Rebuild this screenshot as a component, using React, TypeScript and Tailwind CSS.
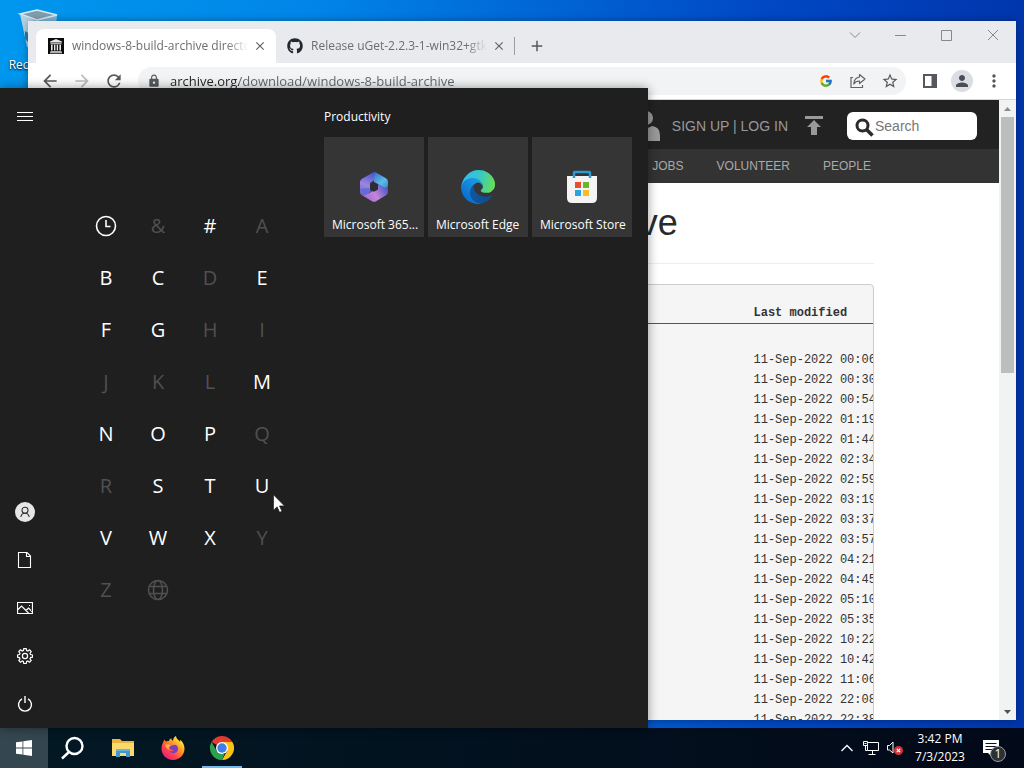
import type { ReactNode } from "react";
import { FaGithub } from "react-icons/fa";
import { FcGoogle } from "react-icons/fc";
import {
  MdAdd,
  MdArrowBack,
  MdArrowForward,
  MdClose,
  MdLock,
  MdMoreVert,
  MdPerson,
  MdRefresh,
  MdStarOutline,
} from "react-icons/md";

const modifiedDates = [
  "11-Sep-2022 00:06",
  "11-Sep-2022 00:30",
  "11-Sep-2022 00:54",
  "11-Sep-2022 01:19",
  "11-Sep-2022 01:44",
  "11-Sep-2022 02:34",
  "11-Sep-2022 02:59",
  "11-Sep-2022 03:19",
  "11-Sep-2022 03:37",
  "11-Sep-2022 03:57",
  "11-Sep-2022 04:21",
  "11-Sep-2022 04:45",
  "11-Sep-2022 05:10",
  "11-Sep-2022 05:35",
  "11-Sep-2022 10:22",
  "11-Sep-2022 10:42",
  "11-Sep-2022 11:06",
  "11-Sep-2022 22:08",
  "11-Sep-2022 22:38",
];

const letters = "&#ABCDEFGHIJKLMNOPQRSTUVWXYZ".split("");
const enabledLetters = "#BCEFGMNOPSTUVWX";

/* ---------- Icons ---------- */

function RecycleBinIcon() {
  return (
    <svg width="48" height="48" viewBox="0 0 48 48" aria-hidden="true">
      <path d="M4 6 21 2l20 5-3 36-24 3z" fill="#a9c6d6" opacity=".75" />
      <path d="M4 6 21 2l20 5-20 5z" fill="#7f9fb0" stroke="#dcebf2" strokeWidth="1.5" />
      <path d="M4 6l14 6 2 32-9-5z" fill="#c6dbe6" opacity=".8" />
      <path d="M9 23l5 3-2 8-3-3z" fill="#2b7fae" />
    </svg>
  );
}

function ArchiveFavicon() {
  return (
    <svg width="16" height="16" viewBox="0 0 16 16" aria-hidden="true">
      <path d="M0 0h16v16H0z" fill="#0a0a0a" />
      <path d="M8 1l6 2.4v1.2H2V3.4zM2.5 5.3h11v.9h-11zM3 6.8h1.6v5.7H3zM6 6.8h1.4v5.7H6zM8.7 6.8h1.4v5.7H8.7zM11.4 6.8H13v5.7h-1.6zM2.5 13h11v.8h-11zM2 14.2h12v1H2z" fill="#e8e8e8" />
    </svg>
  );
}

function ShareIcon() {
  return (
    <svg width="16" height="16" viewBox="0 0 16 16" fill="none" stroke="#5f6368" strokeWidth="1.2" aria-hidden="true">
      <path d="M3 4.5H1v10h11.5V12" />
      <path d="M9.5 1.5 15 6l-5.500 4.500V8C6.500 8 5 9 3.800 11c.2-4 2.200-6.500 5.700-7z" strokeLinejoin="round" />
    </svg>
  );
}

function Microsoft365Icon() {
  return (
    <svg width="30" height="32" viewBox="0 0 30 32" aria-hidden="true">
      <defs>
        <linearGradient id="m365-left" x1="12" y1="2" x2="4" y2="24" gradientUnits="userSpaceOnUse">
          <stop offset="0" stopColor="#4d58cf" />
          <stop offset=".55" stopColor="#9d86e0" />
          <stop offset="1" stopColor="#6e62cc" />
        </linearGradient>
        <linearGradient id="m365-right" x1="14" y1="3" x2="27" y2="18" gradientUnits="userSpaceOnUse">
          <stop offset="0" stopColor="#3f6fc8" />
          <stop offset=".6" stopColor="#58bde8" />
          <stop offset="1" stopColor="#3f8fd0" />
        </linearGradient>
        <linearGradient id="m365-bottom" x1="8" y1="28" x2="28" y2="16" gradientUnits="userSpaceOnUse">
          <stop offset="0" stopColor="#a86fd6" />
          <stop offset=".4" stopColor="#c585da" />
          <stop offset="1" stopColor="#4a56c4" />
        </linearGradient>
      </defs>
      <path d="M14 1.500 3 7.800Q1 9 1 11v10q0 2.200 2 3.300l3 1.500 5-5V12l9-6-3-4.500q-1.500-1-3 0z" fill="url(#m365-left)" />
      <path d="M17 1.500 27 7.300q2 1.200 2 3.700v9l-10-7-4-2V6q0-3 2-4.500z" fill="url(#m365-right)" />
      <path d="M29 14v7q0 2-2 3.200l-10 6q-2 1-4 0l-10-6q3 1 5-1l11-6V13l5 3q4 2 5-2z" fill="url(#m365-bottom)" />
      <path d="M1 18q1 5 6 5l6-3-3-3z" fill="#5a6cd8" opacity=".8" />
      <path d="M15 11.500 19 13.800v4.600L15 20.700l-4-2.300v-4.600z" fill="#2e2c34" />
    </svg>
  );
}

function EdgeIcon() {
  return (
    <svg width="34" height="34" viewBox="0 0 256 256" aria-hidden="true">
      <defs>
        <linearGradient id="edge-a" x1="63" y1="177" x2="241" y2="177" gradientUnits="userSpaceOnUse">
          <stop offset="0" stopColor="#0c59a4" />
          <stop offset="1" stopColor="#114a8b" />
        </linearGradient>
        <linearGradient id="edge-b" x1="157" y1="99" x2="46" y2="220" gradientUnits="userSpaceOnUse">
          <stop offset="0" stopColor="#1b9de2" />
          <stop offset=".6" stopColor="#1680d8" />
          <stop offset="1" stopColor="#0a6fd0" />
        </linearGradient>
        <linearGradient id="edge-c" x1="10" y1="60" x2="245" y2="120" gradientUnits="userSpaceOnUse">
          <stop offset="0" stopColor="#35b8f0" />
          <stop offset=".5" stopColor="#36c8c8" />
          <stop offset="1" stopColor="#66dd55" />
        </linearGradient>
      </defs>
      <path d="M231 190a94 94 0 0 1-11 5 102 102 0 0 1-36 6c-47 0-89-32-89-74 0-11 7-22 17-28-43 2-54 46-54 72 0 74 68 81 82 81 8 0 20-2 27-4h2a128 128 0 0 0 66-53 4 4 0 0 0-4-5z" fill="url(#edge-a)" />
      <path d="M106 241a79 79 0 0 1-23-21 81 81 0 0 1 29-121c3-1 8-4 16-4a33 33 0 0 1 26 13 33 33 0 0 1 6 19c0-1 25-80-80-80-44 0-80 42-80 79a130 130 0 0 0 12 56 128 128 0 0 0 157 66 76 76 0 0 1-63-7z" fill="url(#edge-b)" />
      <path d="M152 149c-1 1-3 3-3 6 0 3 2 6 5 8 14 10 42 9 42 9a60 60 0 0 0 31-9 62 62 0 0 0 30-53c0-22-8-37-11-43C226 26 182 0 134 0A128 128 0 0 0 6 126c1-36 37-66 80-66 4 0 24 0 42 10 16 8 24 19 30 28 6 11 7 24 7 29 0 6-2 14-13 22z" fill="url(#edge-c)" />
    </svg>
  );
}

function StoreIcon() {
  return (
    <svg width="32" height="34" viewBox="0 0 32 34" aria-hidden="true">
      <path d="M1 6h30v22q0 5-5 5H6q-5 0-5-5z" fill="#f4f4f4" />
      <path d="M8 8V3q0-1 1-1h14q1 0 1 1v5" fill="none" stroke="#2f9bd4" strokeWidth="2.5" />
      <path d="M9 12h6v6H9z" fill="#e8502a" />
      <path d="M17 12h6v6h-6z" fill="#6fb52c" />
      <path d="M9 20h6v6H9z" fill="#29a3e2" />
      <path d="M17 20h6v6h-6z" fill="#f8bd25" />
    </svg>
  );
}

function ClockIcon() {
  return (
    <svg width="22" height="22" viewBox="0 0 22 22" fill="none" stroke="currentColor" strokeWidth="1.6" aria-hidden="true">
      <circle cx="11" cy="11" r="9.5" />
      <path d="M11 5v6.500h4.500" />
    </svg>
  );
}

function GlobeIcon() {
  return (
    <svg width="22" height="22" viewBox="0 0 22 22" fill="none" stroke="currentColor" strokeWidth="1.6" aria-hidden="true">
      <circle cx="11" cy="11" r="9.5" />
      <ellipse cx="11" cy="11" rx="4.5" ry="9.5" />
      <path d="M2.500 7.500h17M2.500 14.500h17" />
    </svg>
  );
}

function UserIcon() {
  return (
    <svg width="20" height="20" viewBox="0 0 20 20" aria-hidden="true">
      <circle cx="10" cy="10" r="10" fill="#e6e6e6" />
      <g fill="none" stroke="#333" strokeWidth="1.1">
        <circle cx="10" cy="8.200" r="3" />
        <path d="M5.800 15c.4-2.500 2-3.800 4.200-3.800s3.800 1.300 4.200 3.800" />
      </g>
    </svg>
  );
}

function DocumentIcon() {
  return (
    <svg width="16" height="16" viewBox="0 0 16 16" fill="none" stroke="#fff" strokeWidth="1.100" aria-hidden="true">
      <path d="M1.500.500h8.500l3.500 3.500v11.500h-12zM9.500 .500v4h4" />
    </svg>
  );
}

function PictureIcon() {
  return (
    <svg width="16" height="12" viewBox="0 0 16 12" fill="none" stroke="#fff" strokeWidth="1.200" aria-hidden="true">
      <path d="M.5.5h15v11H.5zM1 7.500 4.500 4l7 7M9 8.500l2.500-2.500 4 4" />
      <path d="M12 3.500h1" />
    </svg>
  );
}

function GearIcon() {
  return (
    <svg width="16" height="16" viewBox="0 0 16 16" fill="none" stroke="#fff" strokeWidth="1.200" aria-hidden="true">
      <path d="M6.800.6h2.400l.4 2 1.200.5 1.700-1.200 1.700 1.700-1.200 1.700.5 1.200 2 .4v2.300l-2 .4-.5 1.200 1.200 1.700-1.700 1.700-1.700-1.200-1.200.5-.4 2H6.800l-.4-2-1.200-.5-1.700 1.200-1.700-1.700L3 10.800l-.5-1.200-2-.4V6.900l2-.4L3 5.300 1.800 3.600l1.700-1.700 1.700 1.200 1.200-.5z" />
      <circle cx="8" cy="8" r="2.600" />
    </svg>
  );
}

function PowerIcon() {
  return (
    <svg width="16" height="16" viewBox="0 0 16 16" fill="none" stroke="#fff" strokeWidth="1.400" aria-hidden="true">
      <path d="M5 2.900a6.500 6.500 0 1 0 6 0M8 0v7" />
    </svg>
  );
}

function WindowsIcon() {
  return (
    <svg width="16" height="16" viewBox="0 0 16 16" fill="#fff" aria-hidden="true">
      <path d="M0 2.300 6.500 1.400v6.200H0zM7.300 1.200 16 0v7.600H7.300zM0 8.400h6.500v6.200L0 13.700zM7.300 8.400H16V16l-8.700-1.200z" />
    </svg>
  );
}

function TaskSearchIcon() {
  return (
    <svg width="24" height="24" viewBox="0 0 24 24" fill="none" stroke="#fff" strokeWidth="2.400" aria-hidden="true">
      <circle cx="13.500" cy="10" r="8" />
      <path d="M8 16 1 22.500" />
    </svg>
  );
}

function ExplorerIcon() {
  return (
    <svg width="22" height="20" viewBox="0 0 22 20" aria-hidden="true">
      <path d="M0 1h8l2 2h12v15H0z" fill="#e9b440" />
      <path d="M0 5h22v13H0z" fill="#fbd96b" />
      <path d="M4 11h14v8h-4v-4H8v4H4z" fill="#3f97d3" />
      <path d="M4 11h14v2H4z" fill="#67b4e3" />
    </svg>
  );
}

function FirefoxIcon() {
  return (
    <svg width="24" height="24" viewBox="0 0 24 24" aria-hidden="true">
      <defs>
        <linearGradient id="ff-body" x1="20" y1="3" x2="4" y2="21" gradientUnits="userSpaceOnUse">
          <stop offset="0" stopColor="#fff04a" />
          <stop offset=".35" stopColor="#ff9a22" />
          <stop offset=".7" stopColor="#ff4450" />
          <stop offset="1" stopColor="#e81f78" />
        </linearGradient>
      </defs>
      <path d="M2 6.500C2.500 5 3.300 4 3.800 3.500c.2 1 .5 1.500.9 2C6 4.800 7 4.800 8 5c0-1.300 1-2.300 2.500-2.800-.4 1.300.3 2 1.500 2.500C12 2.500 13.200 1 15 0c.2 2 1.200 3 3 4.500.5.400.8 1 1 1.500.2-.8.1-1.500 0-2.200C22 6 23.500 9.500 23.500 12.800 23.500 19 18.500 24 12 24S.5 19 .5 12.800c0-2.300.5-4.500 1.500-6.300z" fill="url(#ff-body)" />
      <path d="M7 9c2-.5 3.500.3 5 .5 1-1 3-.8 4 .2 1.500 1.500 1.500 5-.5 6.500-2.500 2-6 1-6.800-1.200 1.600.6 3 .2 4-.8-2 0-3.200-1.500-5.700-1.200C6 12 6 10 7 9z" fill="#7b3fc4" />
      <path d="M4 9c2-1.500 5-.8 7 .8-2 .3-2.800 1.200-2.800 2.200 0 .8.600 1.400 1.300 1.800-2 .3-4-.8-5.500-4.800z" fill="#ffae2b" />
    </svg>
  );
}

function ChromeIcon() {
  return (
    <svg width="24" height="24" viewBox="0 0 24 24" aria-hidden="true">
      <path d="M12 12 1.600 6A12 12 0 0 1 22.400 6z" fill="#e33b2e" />
      <path d="M12 6h10.400A12 12 0 0 1 12 24l5.200-9z" fill="#fbc116" />
      <path d="M1.600 6 6.800 15l5.200 3h2.500L12 24A12 12 0 0 1 1.600 6z" fill="#2ba24c" />
      <circle cx="12" cy="12" r="6" fill="#fff" />
      <circle cx="12" cy="12" r="4.700" fill="#3f7ee8" />
    </svg>
  );
}

/* ---------- Browser window ---------- */

function BrowserTab({ icon, title, active }: { icon: ReactNode; title: string; active?: boolean }) {
  return (
    <div
      className={
        active
          ? "flex h-full w-[240px] items-center rounded-t-lg bg-white pl-3 pr-2"
          : "flex h-full w-[238px] items-center pl-[11px] pr-[7px]"
      }
    >
      {icon}
      <button className="ml-2 flex-1 overflow-hidden whitespace-nowrap text-left text-[12px] text-[#6b6e72] [mask-image:linear-gradient(90deg,#000_88%,transparent)]">
        {title}
      </button>
      <button aria-label="Close tab" className="ml-1 flex size-4 items-center justify-center text-[#5f6368]">
        <MdClose size={14} />
      </button>
    </div>
  );
}

function CaptionButton({ label, children }: { label: string; children: ReactNode }) {
  return (
    <button aria-label={label} className="flex h-7 w-[46px] items-center justify-center">
      <svg width="12" height="12" viewBox="0 0 12 12" fill="none" stroke="#85888d" aria-hidden="true">
        {children}
      </svg>
    </button>
  );
}

function ToolButton({ label, children }: { label: string; children: ReactNode }) {
  return (
    <button aria-label={label} className="flex w-8 shrink-0 items-center justify-center text-[#55585c]">
      {children}
    </button>
  );
}

function BrowserWindow() {
  return (
    <section className="absolute bottom-2 left-7 right-2 top-[21px] flex flex-col overflow-hidden bg-white shadow-[0_0_8px_rgba(0,0,0,0.35)]">
      {/* Tab strip */}
      <div className="flex h-[42px] shrink-0 bg-[#e8eaed]">
        <div className="flex flex-1 pl-2 pt-2">
          <BrowserTab active icon={<ArchiveFavicon />} title="windows-8-build-archive directory listing" />
          <BrowserTab icon={<FaGithub size={16} color="#24292f" />} title="Release uGet-2.2.3-1-win32+gtk3" />
          <button aria-label="New tab" className="my-2 flex w-11 items-center justify-center border-l border-[#9a9da1] text-[#55585c]">
            <MdAdd size={18} />
          </button>
        </div>
        <div className="flex">
          <CaptionButton label="Search tabs"><path d="M1 3.500l5 5 5-5" /></CaptionButton>
          <CaptionButton label="Minimize"><path d="M0 6.500h11" /></CaptionButton>
          <CaptionButton label="Maximize"><path d="M.5 1.500h10v10h-10z" /></CaptionButton>
          <CaptionButton label="Close"><path d="M1 1l10 10M11 1 1 11" /></CaptionButton>
        </div>
      </div>

      {/* Toolbar */}
      <div className="flex h-[37px] shrink-0 border-b border-[#d5d7da] bg-white px-1.5">
        <ToolButton label="Back"><MdArrowBack size={20} /></ToolButton>
        <ToolButton label="Forward"><MdArrowForward size={20} color="#babcbe" /></ToolButton>
        <ToolButton label="Reload"><MdRefresh size={20} /></ToolButton>
        <div className="mx-2 my-1 flex flex-1 items-center rounded-full bg-[#f1f3f4] pl-[9px]">
          <MdLock size={14} color="#55585c" />
          <input
            aria-label="Address"
            defaultValue="archive.org/download/windows-8-build-archive"
            className="ml-[9px] min-w-0 flex-1 bg-[linear-gradient(90deg,#202124_69px,#5f6368_69px)] bg-clip-text pt-0.5 text-[13px] text-transparent outline-none"
          />
          <ToolButton label="Search with Google"><FcGoogle size={14} /></ToolButton>
          <ToolButton label="Share"><ShareIcon /></ToolButton>
          <ToolButton label="Bookmark"><MdStarOutline size={18} /></ToolButton>
        </div>
        <ToolButton label="Side panel">
          <svg width="14" height="14" viewBox="0 0 14 14" aria-hidden="true">
            <path d="M1 1h12v12H1z" fill="none" stroke="#55585c" strokeWidth="2" />
            <path d="M8.500 1H13v12H8.500z" fill="#55585c" />
          </svg>
        </ToolButton>
        <ToolButton label="Profile">
          <span className="flex size-[22px] items-center justify-center rounded-full bg-[#dadde2]">
            <MdPerson size={18} color="#4a4d57" />
          </span>
        </ToolButton>
        <ToolButton label="Menu"><MdMoreVert size={20} /></ToolButton>
      </div>

      {/* Page */}
      <div className="flex min-h-0 flex-1">
        <ArchivePage />
        <div className="flex w-[17px] flex-col items-center bg-[#f1f3f3]">
          <span className="flex h-[17px] items-center">
            <svg width="7" height="4" viewBox="0 0 7 4" fill="#8c8c8c" aria-hidden="true"><path d="M0 4 3.500 0 7 4z" /></svg>
          </span>
          <span className="h-[256px] w-[13px] bg-[#bcbebe]" />
          <span className="mt-auto flex h-[17px] items-center">
            <svg width="7" height="4" viewBox="0 0 7 4" fill="#505050" aria-hidden="true"><path d="M0 0h7L3.500 4z" /></svg>
          </span>
        </div>
      </div>
    </section>
  );
}

function ArchivePage() {
  return (
    <div className="min-w-0 flex-1 overflow-hidden bg-white font-['Liberation_Sans',Arial,sans-serif]">
      <header>
        <div className="flex h-[49px] items-center justify-end bg-[#222] pr-[22px] pt-[3px] text-[#999]">
          <svg width="28" height="30" viewBox="0 0 28 30" fill="#999" aria-hidden="true">
            <circle cx="14" cy="7" r="7" />
            <path d="M0 30v-6q0-8 8-9 6 4 12 0 8 1 8 9v6z" />
          </svg>
          <a href="#login" className="ml-3 text-[14px]">SIGN UP | LOG IN</a>
          <a href="#upload" aria-label="Upload" className="mx-4 flex">
            <svg width="20" height="20" viewBox="0 0 20 20" fill="#999" aria-hidden="true">
              <path d="M1 0h18v3H1zM10 4l7 7h-4v8H7v-8H3z" />
            </svg>
          </a>
          <label className="ml-[7px] flex h-7 w-[130px] items-center rounded-md bg-white pl-2">
            <svg width="19" height="19" viewBox="0 0 19 19" fill="none" stroke="#2a2a2a" strokeWidth="3" aria-hidden="true" className="mt-0.5 shrink-0">
              <circle cx="7.500" cy="7.500" r="5.500" />
              <path d="M11.500 11.500l6 6" strokeWidth="3.500" />
            </svg>
            <input aria-label="Search" placeholder="Search" className="ml-px w-full min-w-0 text-[14px] outline-none placeholder:text-[#777]" />
          </label>
        </div>
        <nav className="flex h-[34px] items-center justify-end gap-[33px] bg-[#333] pr-32 text-[12px] text-[#aaa]">
          <a href="#jobs">JOBS</a>
          <a href="#volunteer">VOLUNTEER</a>
          <a href="#people">PEOPLE</a>
        </nav>
      </header>

      <main className="mx-auto max-w-[750px] px-[15px] pt-5 text-[#333]">
        <h1 className="text-[36px] leading-10 text-[#2a2a2a]">Files for windows-8-build-archive</h1>
        <hr className="my-5 border-[#eee]" />
        <div className="overflow-hidden rounded border border-[#ccc] bg-[#f5f5f5] pt-[18px] font-['Liberation_Mono',monospace] text-[12px] leading-5">
          <table className="w-full table-fixed border-collapse whitespace-nowrap text-left">
            <thead>
              <tr className="border-b border-[#555]">
                <th className="w-[599px]" aria-label="Name" />
                <th>Last modified</th>
              </tr>
            </thead>
            <tbody>
              <tr className="h-[26px]">
                <td colSpan={2} />
              </tr>
              {modifiedDates.map((date) => (
                <tr key={date}>
                  <td />
                  <td>{date}</td>
                </tr>
              ))}
            </tbody>
          </table>
        </div>
      </main>
    </div>
  );
}

/* ---------- Start menu ---------- */

function RailButton({ label, children }: { label: string; children: ReactNode }) {
  return (
    <button aria-label={label} className="flex h-12 w-full items-center justify-center">
      {children}
    </button>
  );
}

function Tile({ label, icon }: { label: string; icon: ReactNode }) {
  return (
    <button className="relative flex size-[100px] items-center justify-center bg-[#353535]">
      {icon}
      <span className="absolute bottom-1 left-2 whitespace-nowrap text-[12px] leading-4">{label}</span>
    </button>
  );
}

function StartMenu() {
  return (
    <section className="absolute bottom-0 left-0 top-[88px] flex w-[648px] bg-[#1f1f1f] text-white shadow-[0_0_10px_rgba(0,0,0,0.4)]">
      <div className="flex w-[50px] flex-col pt-[5px]">
        <RailButton label="Expand">
          <svg width="16" height="10" viewBox="0 0 16 10" stroke="#fff" aria-hidden="true">
            <path d="M0 .500h16M0 4.500h16M0 8.500h16" />
          </svg>
        </RailButton>
        <div className="mt-auto">
          <RailButton label="Account"><UserIcon /></RailButton>
          <RailButton label="Documents"><DocumentIcon /></RailButton>
          <RailButton label="Pictures"><PictureIcon /></RailButton>
          <RailButton label="Settings"><GearIcon /></RailButton>
          <RailButton label="Power"><PowerIcon /></RailButton>
        </div>
      </div>

      {/* Letter index */}
      <div className="ml-[30px] mt-28 grid auto-rows-[52px] grid-cols-[repeat(4,52px)] content-start text-[20px]">
        <button aria-label="Recently added" className="flex items-center justify-center"><ClockIcon /></button>
        {letters.map((letter) =>
          enabledLetters.includes(letter) ? (
            <button key={letter}>{letter}</button>
          ) : (
            <button key={letter} disabled className="text-[#505050]">{letter}</button>
          )
        )}
        <button aria-label="Other languages" disabled className="flex items-center justify-center text-[#505050]"><GlobeIcon /></button>
      </div>

      {/* Pinned tiles */}
      <div className="ml-9 pt-5">
        <h2 className="text-[12px] leading-[18px]">Productivity</h2>
        <div className="mt-[11px] flex gap-1">
          <Tile label="Microsoft 365..." icon={<Microsoft365Icon />} />
          <Tile label="Microsoft Edge" icon={<EdgeIcon />} />
          <Tile label="Microsoft Store" icon={<StoreIcon />} />
        </div>
      </div>
    </section>
  );
}

/* ---------- Taskbar ---------- */

function Taskbar() {
  return (
    <footer className="flex h-10 shrink-0 justify-between bg-gradient-to-r from-[#021924] to-[#020919] text-white">
      <div className="flex gap-px">
        <button aria-label="Start" className="flex w-12 items-center justify-center bg-[#34464f]"><WindowsIcon /></button>
        <button aria-label="Search" className="flex w-12 items-center justify-center"><TaskSearchIcon /></button>
        <button aria-label="File Explorer" className="flex w-[50px] items-center justify-center"><ExplorerIcon /></button>
        <button aria-label="Firefox" className="flex w-12 items-center justify-center"><FirefoxIcon /></button>
        <button aria-label="Chrome" className="mx-1 flex w-10 items-center justify-center border-b-2 border-[#76b9ed] pt-0.5"><ChromeIcon /></button>
      </div>
      <div className="flex items-center">
        <button aria-label="Show hidden icons" className="flex w-6 justify-center">
          <svg width="12" height="8" viewBox="0 0 12 8" fill="none" stroke="#fff" strokeWidth="1.300" aria-hidden="true"><path d="M.5 7 6 1.500 11.500 7" /></svg>
        </button>
        <button aria-label="Network" className="flex w-6 justify-center">
          <svg width="16" height="14" viewBox="0 0 16 14" fill="none" stroke="#fff" aria-hidden="true">
            <path d="M4.500 2.500V.5h-4v4h4zM4.500 1.500h11v8h-11v-5M2.500 4.500v5h2M9.500 9.500v3.500M5.500 13.500h7M1.500 2.500h2" />
          </svg>
        </button>
        <button aria-label="Volume muted" className="flex w-6 justify-center">
          <svg width="16" height="14" viewBox="0 0 16 14" fill="none" aria-hidden="true">
            <path d="M.5 4.500h2L6 1v11L2.500 9h-2z" stroke="#fff" />
            <circle cx="11.500" cy="9.500" r="4.500" fill="#d13438" />
            <path d="M9.800 7.800l3.400 3.400m0-3.400-3.400 3.400" stroke="#fff" strokeWidth="1.200" />
          </svg>
        </button>
        <button className="w-[66px] text-center text-[12px] leading-[18px]">
          <span className="block">3:42 PM</span>
          <span className="block">7/3/2023</span>
        </button>
        <button aria-label="Notifications" className="relative flex h-full w-[51px] items-center pl-2.5">
          <svg width="16" height="16" viewBox="0 0 16 16" aria-hidden="true">
            <path d="M0 0h16v13H8v3l-3-3H0z" fill="#fff" />
            <path d="M2.500 3.500h11M2.500 6.500h11M2.500 9.500h7" stroke="#0a1020" />
          </svg>
          <span className="absolute left-[17px] top-[18px] flex size-4 items-center justify-center rounded-full border border-[#9a9a9a] bg-[#2c3038] text-[12px]">1</span>
        </button>
      </div>
    </footer>
  );
}

export default function App() {
  return (
    <div className="flex h-screen flex-col overflow-hidden font-['Open_Sans','Noto_Sans',sans-serif]">
      <main className="relative flex-1 bg-[linear-gradient(90deg,#0097ee_0%,#0086e8_30%,#0048c4_75%,#0036ad_100%)]">
        <div className="absolute left-0 top-2 flex w-20 flex-col items-center text-[12px] text-white">
          <RecycleBinIcon />
          <span className="[text-shadow:0_1px_2px_#000]">Recycle Bin</span>
        </div>
        <BrowserWindow />
        <StartMenu />
        <svg className="absolute left-[273px] top-[494px]" width="12" height="19" viewBox="0 0 12 19" aria-hidden="true">
          <path d="M.5.800v15.500l3.600-3.500 2.500 5.500 2.400-1-2.500-5.400h5z" fill="#fff" stroke="#111" strokeWidth=".6" />
        </svg>
      </main>
      <Taskbar />
    </div>
  );
}
